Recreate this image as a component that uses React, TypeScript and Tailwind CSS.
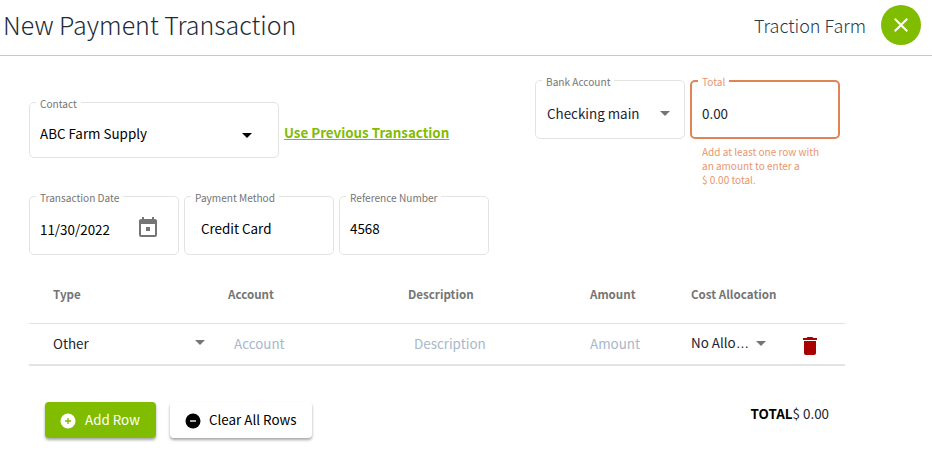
import type { ReactNode } from 'react';
import { MdClose, MdDelete } from 'react-icons/md';

const font = { fontFamily: '"Noto Sans CJK SC", "Noto Sans", sans-serif' };

function Caret({ className = 'border-t-[#757575]' }: { className?: string }) {
    return <span className={`inline-block w-0 h-0 border-x-[5px] border-x-transparent border-t-[5px] ${className}`} />;
}

function CalendarIcon() {
    return (
        <svg width="24" height="24" viewBox="0 0 24 24" fill="#757575" className="mb-[2px]">
            <path d="M16 1v2H8V1H6v2H5c-1.1 0-2 .9-2 2v14c0 1.1.9 2 2 2h14c1.1 0 2-.9 2-2V5c0-1.1-.9-2-2-2h-1V1h-2zm3 18H5V8h14v11z" />
            <path d="M10 11h4v4h-4z" />
        </svg>
    );
}

function CircleIcon({ plus, bg, fg }: { plus?: boolean; bg: string; fg: string }) {
    return (
        <svg width="18" height="18" viewBox="0 0 24 24" className="mt-[3px] shrink-0">
            <circle cx="12" cy="12" r="10" fill={bg} />
            <path d={plus ? 'M8 12h8M12 8v8' : 'M8 12h8'} stroke={fg} strokeWidth="1.8" />
        </svg>
    );
}

function Field({ label, className, children, error }: { label: string; className: string; children: ReactNode; error?: boolean }) {
    return (
        <fieldset className={`rounded-[5px] ${error ? 'border-2 border-[#e08457]' : 'border border-[#e3e3e3]'} ${className}`}>
            <legend className={`ml-[6px] px-[4px] text-[10.1px] leading-[14px] ${error ? 'pt-[2px] text-[#e9966e]' : 'pt-[4px] text-[#757575]'}`}>{label}</legend>
            {children}
        </fieldset>
    );
}

export default function App() {
    return (
        <div style={font} className="w-[932px] h-[459px] bg-white text-[#1c2331] overflow-hidden">
            {/* Header */}
            <div className="h-[56px] pb-[5px] border-b border-[#c8c8c8] flex items-center justify-between pl-[3px] pr-[11px]">
                <h1 className="text-[25px] font-light text-[#1c2b3a]">New Payment Transaction</h1>
                <div className="flex items-center gap-[15px]">
                    <span className="text-[18px] font-light text-[#1f3a4d]">Traction Farm</span>
                    <button className="w-[40px] h-[40px] rounded-full bg-[#80bc00] flex items-center justify-center text-white">
                        <MdClose size={24} />
                    </button>
                </div>
            </div>

            {/* Form */}
            <div className="flex justify-between pl-[29px] pr-[92px]">
                <div>
                    <div className="flex items-center gap-[5px] mt-[37px]">
                        <Field label="Contact" className="w-[250px] h-[65px]">
                            <div className="flex items-center justify-between pl-[10px] pr-[26px] pt-[12px] text-[13.4px] text-black">
                                <span>ABC Farm Supply</span>
                                <Caret className="border-t-black mt-[5px]" />
                            </div>
                        </Field>
                        <a className="mt-[15px] text-[13.35px] font-bold text-[#80bc00] underline">Use Previous Transaction</a>
                    </div>
                    <div className="flex gap-[5px] mt-[29px]">
                        <Field label="Transaction Date" className="w-[150px] h-[68px]">
                            <div className="flex items-center justify-between pl-[10px] pr-[18px] pt-[11px] text-[13.4px] text-black">
                                <span>11/30/2022</span>
                                <CalendarIcon />
                            </div>
                        </Field>
                        <Field label="Payment Method" className="w-[150px] h-[68px]">
                            <div className="pl-[16px] pt-[13px] text-[13.4px] text-black">Credit Card</div>
                        </Field>
                        <Field label="Reference Number" className="w-[150px] h-[68px]">
                            <div className="pl-[10px] pt-[13px] text-[13.4px] text-black">4568</div>
                        </Field>
                    </div>
                </div>

                <div className="flex gap-[5px] mt-[15px] items-start">
                    <Field label="Bank Account" className="w-[150px] h-[68px]">
                        <div className="flex items-center justify-between pl-[11px] pr-[14px] pt-[14px] text-[13.4px]">
                            <span>Checking main</span>
                            <Caret />
                        </div>
                    </Field>
                    <div className="w-[150px] mt-[2px]">
                        <Field label="Total" error className="h-[66px]">
                            <div className="pl-[10px] pt-[14px] text-[13.4px]">0.00</div>
                        </Field>
                        <p className="mt-[6px] pl-[12px] w-[132px] text-[10px] leading-[14px] text-[#e9966e]">
                            Add at least one row with an amount to enter a $&nbsp;0.00 total.
                        </p>
                    </div>
                </div>
            </div>

            {/* Rows table */}
            <div className="ml-[29px] w-[816px] mt-[-1px]">
                <div className="grid grid-cols-[175px_180px_182px_101px_1fr] pl-[24px] h-[70px] pt-[13px] items-center border-b border-[#e3e3e3] text-[11.6px] font-bold text-[#757575]">
                    <span>Type</span>
                    <span>Account</span>
                    <span>Description</span>
                    <span>Amount</span>
                    <span>Cost Allocation</span>
                </div>
                <div className="grid grid-cols-[175px_180px_182px_101px_1fr] pl-[24px] h-[42px] pb-[2px] items-center border-b-2 border-[#e3e3e3] text-[13.4px]">
                    <div className="flex items-center justify-between pr-[23px]">
                        <span>Other</span>
                        <Caret />
                    </div>
                    <span className="pl-[6px] text-[#a9b7cb]">Account</span>
                    <span className="pl-[6px] text-[#a9b7cb]">Description</span>
                    <span className="text-[#a9b7cb]">Amount</span>
                    <div className="flex items-center">
                        <span className="w-[60px] whitespace-nowrap">No Allo<span className="font-['Liberation_Sans']">…</span></span>
                        <span className="ml-[5px] flex"><Caret /></span>
                        <MdDelete size={24} className="ml-[32px] mt-[6px] text-[#a90000]" />
                    </div>
                </div>
            </div>

            {/* Footer */}
            <div className="flex items-start justify-between pl-[45px] pr-[103px] mt-[36px]">
                <div className="flex gap-[14px]">
                    <button className="h-[36px] w-[111px] pl-[14px] pb-[2px] rounded-[4px] bg-[#80bc00] text-white text-[13.4px] flex items-center gap-[8px] shadow-[0_2px_3px_rgba(0,0,0,0.35)]">
                        <CircleIcon plus bg="#ffffff" fg="#80bc00" />
                        Add Row
                    </button>
                    <button className="h-[36px] w-[142px] pl-[14px] pb-[2px] rounded-[4px] bg-white text-black text-[13.4px] flex items-center gap-[7px] shadow-[0_2px_3px_rgba(0,0,0,0.35)]">
                        <CircleIcon bg="#000000" fg="#ffffff" />
                        Clear All Rows
                    </button>
                </div>
                <div className="text-[13.4px] mt-[1px] text-[#1c2331]">
                    <span className="font-bold text-black">TOTAL</span>$ 0.00
                </div>
            </div>
        </div>
    );
}
